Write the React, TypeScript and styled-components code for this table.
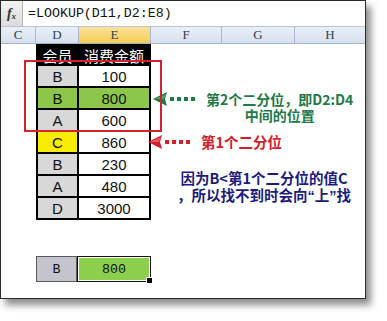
import React from 'react'
import styled, { createGlobalStyle } from 'styled-components'

const GlobalStyle = createGlobalStyle`
  html, body {
    margin: 0;
    padding: 0;
    background: #ffffff;
  }
  body {
    font-family: 'Liberation Sans', Arial, sans-serif;
  }
`

const CJK = `'Noto Sans CJK SC', 'Liberation Sans', sans-serif`

const rows = [
  { key: 'B', amount: '100', tone: 'plain' },
  { key: 'B', amount: '800', tone: 'green' },
  { key: 'A', amount: '600', tone: 'plain' },
  { key: 'C', amount: '860', tone: 'yellow' },
  { key: 'B', amount: '230', tone: 'plain' },
  { key: 'A', amount: '480', tone: 'plain' },
  { key: 'D', amount: '3000', tone: 'plain' },
] as const

type Tone = 'plain' | 'green' | 'yellow'

const columns = [
  { name: 'C', active: false },
  { name: 'D', active: false },
  { name: 'E', active: true },
  { name: 'F', active: false },
  { name: 'G', active: false },
  { name: 'H', active: false },
]

// arrow used by the two notes, colour passed in
const NoteArrow = ({ color, dark }: { color: string; dark: string }) => (
  <svg width="46" height="16" viewBox="0 0 46 16">
    <polygon points="1,8 15,1 13,8 15,15" fill={dark} />
    <polygon points="3,8 14,3 12,8" fill={color} opacity="0.6" />
    <rect x="18" y="6" width="4" height="4" fill={dark} />
    <rect x="25" y="6" width="4" height="4" fill={dark} />
    <rect x="32" y="6" width="4" height="4" fill={dark} />
    <rect x="39" y="6" width="4" height="4" fill={dark} />
  </svg>
)

export default function App() {
  return (
    <>
      <GlobalStyle />
      <Page>
        <Window>
          <FormulaBar>
            <FxBox>
              <i>f</i>
              <small>x</small>
            </FxBox>
            <Formula>=LOOKUP(D11,D2:E8)</Formula>
          </FormulaBar>

          <ColumnHeads>
            {columns.map(c => (
              <ColumnHead key={c.name} $active={c.active}>
                {c.name}
              </ColumnHead>
            ))}
          </ColumnHeads>

          <Sheet>
            <Gutter />
            <TableColumn>
              <DataTable>
                <HeadCell>会员</HeadCell>
                <HeadCell>消费金额</HeadCell>
                {rows.map((r, i) => (
                  <React.Fragment key={i}>
                    <KeyCell $tone={r.tone as Tone}>{r.key}</KeyCell>
                    <AmountCell $tone={r.tone as Tone}>{r.amount}</AmountCell>
                  </React.Fragment>
                ))}
              </DataTable>

              <ResultRow>
                <ResultKey>B</ResultKey>
                <ResultValue>
                  800
                  <FillHandle />
                </ResultValue>
              </ResultRow>
            </TableColumn>

            <Notes>
              <NoteRow $top={47}>
                <NoteArrow color="#6fc08a" dark="#1d7a43" />
                <GreenText>
                  第2个二分位，即D2:D4
                  <br />
                  中间的位置
                </GreenText>
              </NoteRow>
              <NoteRow $top={11} $shift={-5}>
                <NoteArrow color="#f08080" dark="#d31f2b" />
                <RedText>第1个二分位</RedText>
              </NoteRow>
              <BlueText>
                因为B&lt;第1个二分位的值C
                <br />
                ，所以找不到时会向<Quote>“</Quote>上<Quote>”</Quote>找
              </BlueText>
            </Notes>

            <RedFrame />
          </Sheet>
        </Window>
      </Page>
    </>
  )
}

const Page = styled.div`
  width: 387px;
  height: 321px;
  background: #ffffff;
`

const Window = styled.div`
  box-sizing: border-box;
  width: 366px;
  height: 299px;
  border: 1px solid #2a2a2a;
  background: #ffffff;
  box-shadow: 5px 6px 7px rgba(0, 0, 0, 0.45);
  display: flex;
  flex-direction: column;
  overflow: hidden;
`

const FormulaBar = styled.div`
  height: 25px;
  display: flex;
  align-items: center;
  border-bottom: 1px solid #b9c4d2;
  background: #ffffff;
`

const FxBox = styled.div`
  width: 22px;
  height: 100%;
  box-sizing: border-box;
  background: linear-gradient(#f2f2f2, #dcdcdc);
  border-right: 1px solid #b0b0b0;
  display: flex;
  align-items: center;
  justify-content: center;
  font-family: 'Liberation Serif', serif;
  font-weight: bold;
  color: #333;
  i {
    font-size: 14px;
  }
  small {
    font-size: 9px;
    font-style: italic;
    margin-top: 4px;
  }
`

const Formula = styled.div`
  margin-left: 5px;
  font-family: 'Liberation Mono', monospace;
  font-size: 13.3px;
  color: #111;
`

const ColumnHeads = styled.div`
  height: 16px;
  display: grid;
  grid-template-columns: 35px 43px 72px 71px 73px 1fr;
  border-bottom: 1px solid #9fb3cb;
  background: linear-gradient(#e9eff7, #d6e0ee);
`

const ColumnHead = styled.div<{ $active: boolean }>`
  display: flex;
  align-items: center;
  justify-content: center;
  border-right: 1px solid #a9bad0;
  font-family: 'Liberation Serif', serif;
  font-size: 13px;
  color: #2d3e55;
  background: ${p => (p.$active ? 'linear-gradient(#fbe29a, #f6cd55)' : 'transparent')};
  &:last-child {
    border-right: none;
  }
`

const Sheet = styled.div`
  position: relative;
  flex: 1;
  display: flex;
`

const Gutter = styled.div`
  width: 35px;
  flex: none;
`

const TableColumn = styled.div`
  width: 115px;
  flex: none;
  display: flex;
  flex-direction: column;
`

const DataTable = styled.div`
  display: grid;
  grid-template-columns: 39px 70px;
  grid-template-rows: 18px repeat(7, 20px);
  gap: 2px;
  border: 2px solid #000;
  background: #000;
`

const HeadCell = styled.div`
  display: flex;
  align-items: center;
  justify-content: center;
  background: #000;
  color: #fff;
  font-family: ${CJK};
  font-size: 15px;
  line-height: 1;
`

const toneBg = (tone: Tone, base: string) =>
  tone === 'green' ? '#8cc64a' : tone === 'yellow' ? '#f8ec00' : base

const KeyCell = styled.div<{ $tone: Tone }>`
  display: flex;
  align-items: center;
  justify-content: center;
  background: ${p => toneBg(p.$tone, '#d8d8d8')};
  font-size: 15px;
  color: #111;
`

const AmountCell = styled.div<{ $tone: Tone }>`
  display: flex;
  align-items: center;
  justify-content: center;
  background: ${p => (p.$tone === 'green' ? '#8cc64a' : '#ffffff')};
  font-size: 15px;
  color: #111;
`

const ResultRow = styled.div`
  margin-top: 36px;
  height: 26px;
  display: flex;
  font-family: 'Liberation Mono', monospace;
  font-size: 13.3px;
  color: #111;
`

const ResultKey = styled.div`
  width: 41px;
  box-sizing: border-box;
  border: 1px solid #5a5a5a;
  background: #c4c4cc;
  display: flex;
  align-items: center;
  justify-content: center;
`

const ResultValue = styled.div`
  position: relative;
  width: 74px;
  box-sizing: border-box;
  border: 1px solid #111;
  box-shadow: inset 0 0 0 1px #ffffff;
  background: #8ccf4c;
  display: flex;
  align-items: center;
  justify-content: center;
`

const FillHandle = styled.span`
  position: absolute;
  right: -3px;
  bottom: -3px;
  width: 5px;
  height: 5px;
  background: #000;
  border: 1px solid #fff;
`

const Notes = styled.div`
  flex: 1;
  display: flex;
  flex-direction: column;
  align-items: flex-start;
`

const NoteRow = styled.div<{ $top: number; $shift?: number }>`
  margin-top: ${p => p.$top}px;
  margin-left: ${p => 1 + (p.$shift ?? 0)}px;
  display: flex;
  align-items: flex-start;
  gap: 8px;
`

const NoteText = styled.div`
  font-family: ${CJK};
  font-weight: bold;
  font-size: 14px;
  white-space: nowrap;
  text-shadow: 0 0 2px rgba(255, 255, 255, 0.9);
`

const GreenText = styled(NoteText)`
  color: #1e7a47;
  line-height: 16px;
  text-align: center;
`

const RedText = styled(NoteText)`
  color: #d0202c;
  line-height: 16px;
  font-size: 14.5px;
`

const BlueText = styled(NoteText)`
  margin-top: 19px;
  margin-left: 18px;
  width: 190px;
  color: #1b1b80;
  font-size: 14.5px;
  line-height: 17px;
  text-align: center;
`

const Quote = styled.span`
  font-family: 'Liberation Sans', sans-serif;
`

const RedFrame = styled.div`
  position: absolute;
  left: 23px;
  top: 16px;
  width: 134px;
  height: 68px;
  border: 2px solid #d3212d;
  pointer-events: none;
`
